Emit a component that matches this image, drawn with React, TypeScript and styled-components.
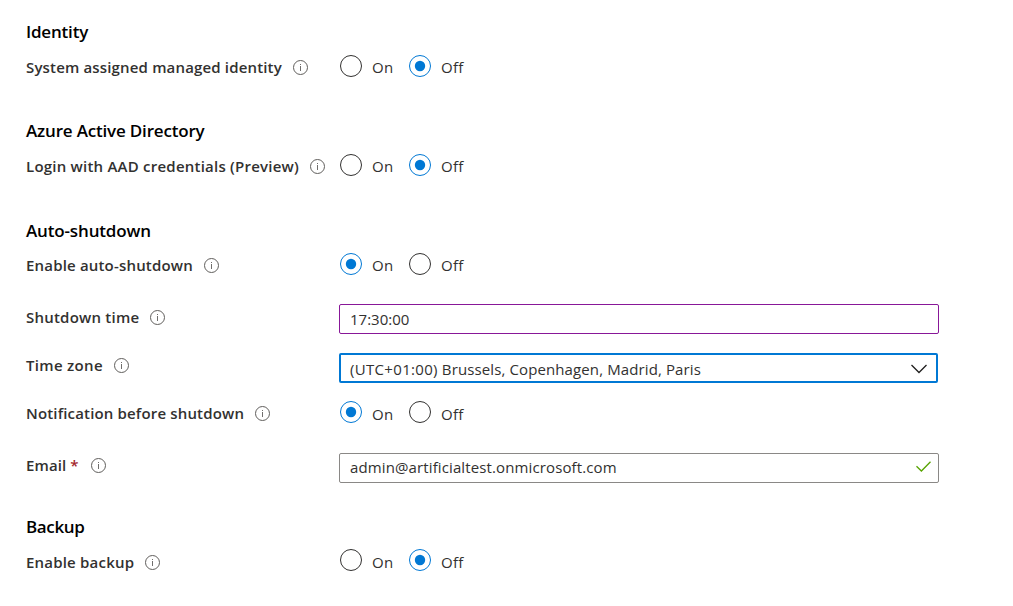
import React from 'react';
import styled, { createGlobalStyle } from 'styled-components';

const Global = createGlobalStyle`
  * { box-sizing: border-box; }
  body { margin: 0; background: #fff; color: #323130; font: 15px/20px "Open Sans", "Noto Sans", sans-serif; }
`;

const Page = styled.main`
  width: 1013px;
  height: 606px;
  padding: 20px 0 0 26px;
  overflow: hidden;
`;

const Section = styled.section<{ $gap: number }>`
  display: flex;
  flex-direction: column;
  margin-bottom: ${p => p.$gap}px;
`;

const Heading = styled.h2<{ $ls: number }>`
  margin: 0;
  height: 24px;
  color: #000;
  font-size: 17px;
  font-weight: 600;
  line-height: 24px;
  letter-spacing: ${p => p.$ls}px;
`;

const Row = styled.div<{ $top: number }>`
  display: grid;
  grid-template-columns: 313px 600px;
  height: 30px;
  margin-top: ${p => p.$top}px;
`;

const LabelCell = styled.div<{ $lift: number }>`
  display: flex;
  align-items: center;
  height: ${p => 30 - 2 * p.$lift}px;
  gap: 11px;
  white-space: nowrap;
`;

const LabelText = styled.span<{ $ls: number }>`
  font-weight: 600;
  letter-spacing: ${p => p.$ls}px;
`;

const Required = styled.span`
  color: #a4262c;
  margin-left: 4px;
  margin-right: 1px;
`;

const RadioGroup = styled.div<{ $top: number }>`
  display: flex;
  align-items: flex-start;
  padding: ${p => p.$top}px 0 0 1px;
`;

const RadioOption = styled.label<{ $width: number }>`
  display: flex;
  align-items: flex-start;
  gap: 10px;
  width: ${p => p.$width}px;
`;

const RadioText = styled.span<{ $drop: number }>`
  padding-top: ${p => p.$drop}px;
  letter-spacing: 0.3px;
`;

const Field = styled.div<{ $kind: 'edited' | 'focused' | 'valid' }>`
  display: flex;
  align-items: center;
  justify-content: space-between;
  height: 30px;
  width: ${p => (p.$kind === 'focused' ? 599 : 600)}px;
  border: ${p => (p.$kind === 'focused' ? '2px solid #0078d4' : p.$kind === 'edited' ? '1px solid #881798' : '1px solid #8a8886')};
  border-radius: 2px;
  padding: ${p => (p.$kind === 'focused' ? '2px 9px 0 9px' : p.$kind === 'edited' ? '0 7px 0 10px' : '0 7px 2px 10px')};
`;

const Value = styled.span<{ $ls: number }>`
  letter-spacing: ${p => p.$ls}px;
  white-space: nowrap;
`;

const Offset = styled.span`
  letter-spacing: 0.32px;
`;

const CheckMark = styled.svg`
  margin-bottom: 2px;
`;

const Info = () => (
  <svg width="15" height="15" viewBox="0 0 15 15" fill="none" stroke="#605e5c">
    <circle cx="7.5" cy="7.5" r="7" />
    <path d="M7.5 6v5M7.5 4v1" strokeWidth="0.9" />
  </svg>
);

const Radio = ({ checked }: { checked: boolean }) => (
  <svg width="22" height="22" viewBox="0 0 22 22">
    <circle cx="11" cy="11" r="10.5" fill="#fff" stroke={checked ? '#0078d4' : '#323130'} />
    {checked && <circle cx="11" cy="11" r="5.2" fill="#0078d4" />}
  </svg>
);

type LabelProps = { text: string; ls?: number; lift?: number; required?: boolean };

const Label = ({ text, ls = 0, lift = 0, required }: LabelProps) => (
  <LabelCell $lift={lift}>
    <LabelText $ls={ls}>
      {text}
      {required && <Required>*</Required>}
    </LabelText>
    <Info />
  </LabelCell>
);

const Toggle = ({ on, top = 3, drop = 2 }: { on: boolean; top?: number; drop?: number }) => (
  <RadioGroup $top={top}>
    <RadioOption $width={69}>
      <Radio checked={on} />
      <RadioText $drop={drop}>On</RadioText>
    </RadioOption>
    <RadioOption $width={60}>
      <Radio checked={!on} />
      <RadioText $drop={drop}>Off</RadioText>
    </RadioOption>
  </RadioGroup>
);

export default function App() {
  return (
    <>
      <Global />
      <Page>
        <Section $gap={37}>
          <Heading $ls={-0.2}>Identity</Heading>
          <Row $top={8}>
            <Label text="System assigned managed identity" ls={0.16} />
            <Toggle on={false} />
          </Row>
        </Section>
        <Section $gap={38}>
          <Heading $ls={-0.18}>Azure Active Directory</Heading>
          <Row $top={8}>
            <Label text="Login with AAD credentials (Preview)" ls={0.225} />
            <Toggle on={false} />
          </Row>
        </Section>
        <Section $gap={32}>
          <Heading $ls={-0.15}>Auto-shutdown</Heading>
          <Row $top={7}>
            <Label text="Enable auto-shutdown" ls={0.18} />
            <Toggle on />
          </Row>
          <Row $top={24}>
            <Label text="Shutdown time" lift={2} ls={0.22} />
            <Field $kind="edited">
              <Value $ls={0}>17:30:00</Value>
            </Field>
          </Row>
          <Row $top={19}>
            <Label text="Time zone" lift={3} ls={0.32} />
            <Field $kind="focused">
              <Value $ls={0.115}>
                <Offset>(UTC+01:00)</Offset> Brussels, Copenhagen, Madrid, Paris
              </Value>
              <svg width="16" height="10" viewBox="0 0 16 10" fill="none" stroke="#201f1e" strokeWidth="1.3">
                <path d="M.5 1 8 8.5 15.5 1" />
              </svg>
            </Field>
          </Row>
          <Row $top={15}>
            <Label text="Notification before shutdown" ls={0.16} />
            <Toggle on drop={3} />
          </Row>
          <Row $top={25}>
            <Label text="Email" lift={3} ls={0.12} required />
            <Field $kind="valid">
              <Value $ls={0.12}>admin@artificialtest.onmicrosoft.com</Value>
              <CheckMark width="15" height="11" viewBox="0 0 15 11" fill="none" stroke="#57a300" strokeWidth="1.3">
                <path d="M.5 5.2 5.4 10 14.5 .8" />
              </CheckMark>
            </Field>
          </Row>
        </Section>
        <Section $gap={0}>
          <Heading $ls={-0.35}>Backup</Heading>
          <Row $top={8}>
            <Label text="Enable backup" ls={0.2} />
            <Toggle on={false} top={2} drop={3} />
          </Row>
        </Section>
      </Page>
    </>
  );
}
